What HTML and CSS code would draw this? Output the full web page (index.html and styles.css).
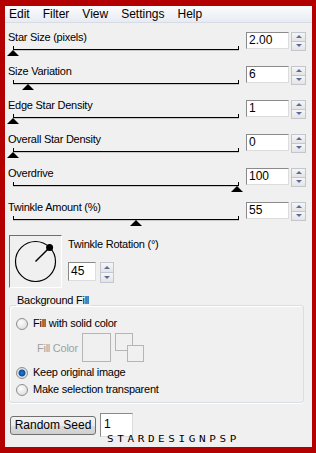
FILE: index.html
```html
<!DOCTYPE html>
<html>
<head>
    <title>Star Filter</title>
    <link rel="stylesheet" href="styles.css">
</head>
<body>
    <div class="window">
        <div class="menu">
            <span>Edit</span>
            <span>Filter</span>
            <span>View</span>
            <span>Settings</span>
            <span>Help</span>
        </div>

        <div class="params">
            <div class="param">
                <div class="track">
                    <div class="label">Star Size (pixels)</div>
                    <div class="rail"><div class="thumb" style="left: 0%"></div></div>
                </div>
                <div class="num">2.00</div>
                <div class="spin"><div class="up"></div><div class="down"></div></div>
            </div>
            <div class="param">
                <div class="track">
                    <div class="label">Size Variation</div>
                    <div class="rail"><div class="thumb" style="left: 6.5%"></div></div>
                </div>
                <div class="num">6</div>
                <div class="spin"><div class="up"></div><div class="down"></div></div>
            </div>
            <div class="param">
                <div class="track">
                    <div class="label">Edge Star Density</div>
                    <div class="rail"><div class="thumb" style="left: 0%"></div></div>
                </div>
                <div class="num">1</div>
                <div class="spin"><div class="up"></div><div class="down"></div></div>
            </div>
            <div class="param">
                <div class="track">
                    <div class="label">Overall Star Density</div>
                    <div class="rail"><div class="thumb" style="left: 0%"></div></div>
                </div>
                <div class="num">0</div>
                <div class="spin"><div class="up"></div><div class="down"></div></div>
            </div>
            <div class="param">
                <div class="track">
                    <div class="label">Overdrive</div>
                    <div class="rail"><div class="thumb" style="left: 100%"></div></div>
                </div>
                <div class="num">100</div>
                <div class="spin"><div class="up"></div><div class="down"></div></div>
            </div>
            <div class="param">
                <div class="track">
                    <div class="label">Twinkle Amount (%)</div>
                    <div class="rail"><div class="thumb" style="left: 55%"></div></div>
                </div>
                <div class="num">55</div>
                <div class="spin"><div class="up"></div><div class="down"></div></div>
            </div>
        </div>

        <div class="rotation">
            <div class="dial">
                <svg width="51" height="51" viewBox="0 0 51 51">
                    <circle cx="25.5" cy="25.5" r="20" fill="none" stroke="#000" stroke-width="1.2"/>
                    <line x1="25.5" y1="25.5" x2="39.6" y2="11.4" stroke="#000" stroke-width="1.4"/>
                    <circle cx="39.6" cy="11.4" r="3.5" fill="#000"/>
                </svg>
            </div>
            <div class="rot-side">
                <div class="label">Twinkle Rotation (&deg;)</div>
                <div class="rot-field">
                    <div class="num small">45</div>
                    <div class="spin small"><div class="up"></div><div class="down"></div></div>
                </div>
            </div>
        </div>

        <fieldset class="group">
            <legend>Background Fill</legend>
            <div class="radio-row"><span class="radio"></span>Fill with solid color</div>
            <div class="fill-row">
                <span class="fill-label">Fill Color</span>
                <span class="swatch"></span>
                <span class="squares"><span class="sq1"></span><span class="sq2"></span></span>
            </div>
            <div class="radio-row second"><span class="radio checked"></span>Keep original image</div>
            <div class="radio-row third"><span class="radio"></span>Make selection transparent</div>
        </fieldset>

        <div class="seed-row">
            <div class="button">Random Seed</div>
            <div class="seed">1</div>
        </div>
        <div class="mark">STARDESIGNPSP</div>
    </div>
</body>
</html>
```

FILE: styles.css
```css
body {
    margin: 0;
    height: 453px;
    overflow: hidden;
    background-color: #b30000;
    font-family: "Liberation Sans", Arial, sans-serif;
    font-size: 11px;
    letter-spacing: -0.25px;
    color: #000;
}

.window {
    margin: 6px 4px 0 5px;
    height: 441px;
    background-color: #f0f0f0;
    overflow: hidden;
}

.menu {
    display: flex;
    gap: 13px;
    height: 16px;
    line-height: 16px;
    padding-left: 4px;
    font-size: 12px;
    letter-spacing: 0;
    background: linear-gradient(#fcfcfd, #e7ebf2);
    border-bottom: 1px solid #d6dbe4;
}

.params {
    margin-top: 9px;
}

.param {
    display: flex;
    height: 34px;
    padding: 0 6px 0 3px;
}

.track {
    flex: 1;
}

.label {
    line-height: 14px;
    margin-top: -2px;
    white-space: nowrap;
}

.rail {
    position: relative;
    height: 3px;
    margin: 2px 7px 0 5px;
    border: 1px solid #000;
    border-top: none;
    box-shadow: 0 1px 0 #c8c8c8;
}

.thumb {
    position: absolute;
    top: calc(100% + 1px);
    width: 0;
    height: 0;
    margin-left: -7px;
    border-left: 6px solid transparent;
    border-right: 6px solid transparent;
    border-bottom: 6px solid #000;
}

.num {
    box-sizing: border-box;
    width: 43px;
    height: 17px;
    padding-left: 2px;
    line-height: 15px;
    font-size: 12px;
    letter-spacing: 0;
    background-color: #fff;
    border: 1px solid;
    border-color: #8a8a8a #dcdcdc #dcdcdc #8a8a8a;
}

.spin {
    display: flex;
    flex-direction: column;
    width: 15px;
    height: 19px;
    margin-left: 2px;
}

.spin .up,
.spin .down {
    flex: 1;
    position: relative;
    box-sizing: border-box;
    border: 1px solid #c3c6cc;
    background: linear-gradient(#f6f6f6, #e4e4e4);
}

.spin .down {
    margin-top: -1px;
}

.spin .up::after,
.spin .down::after {
    content: "";
    position: absolute;
    left: 50%;
    top: 50%;
    margin: -2px 0 0 -3px;
    border-left: 3px solid transparent;
    border-right: 3px solid transparent;
}

.spin .up::after {
    border-bottom: 3px solid #5a6c9c;
}

.spin .down::after {
    border-top: 3px solid #5a6c9c;
}

.rotation {
    display: flex;
    margin-top: -1px;
    padding-left: 4px;
}

.dial {
    width: 51px;
    height: 51px;
    border: 1px solid;
    border-color: #6f6f6f #ffffff #ffffff #6f6f6f;
}

.dial svg {
    display: block;
}

.rot-side {
    margin-left: 6px;
}

.rot-side .label {
    margin-top: 2px;
}

.rot-field {
    display: flex;
    margin-top: 11px;
}

.num.small {
    width: 28px;
    height: 19px;
    line-height: 17px;
}

.spin.small {
    width: 14px;
    height: 21px;
    margin-left: 4px;
}

.group {
    margin: 5px 8px 0 4px;
    padding: 0 6px 6px 6px;
    border: 1px solid #d5dfe5;
    border-radius: 3px;
    box-shadow: inset 1px 1px 0 #fff, 0 1px 0 #fff;
}

.group legend {
    padding: 0 1px 10px;
    line-height: 14px;
}

.radio-row {
    display: flex;
    align-items: center;
    gap: 5px;
    height: 13px;
    line-height: 13px;
}

.radio-row.second {
    margin-top: 4px;
}

.radio-row.third {
    margin-top: 4px;
}

.radio {
    box-sizing: border-box;
    width: 12px;
    height: 12px;
    border-radius: 50%;
    border: 1px solid #8e8f8f;
    background: radial-gradient(circle at 40% 35%, #fdfdfd, #d6d6d6);
}

.radio.checked {
    background: radial-gradient(circle, #1f7fd6 0, #0c4f9c 3px, #eaeaea 4px, #d0d0d0 6px);
}

.fill-row {
    display: flex;
    align-items: center;
    margin-top: 3px;
    padding-left: 21px;
}

.fill-label {
    color: #a0a0a0;
    width: 45px;
}

.swatch {
    box-sizing: border-box;
    width: 29px;
    height: 29px;
    border: 1px solid #b5b5b5;
}

.squares {
    display: grid;
    margin-left: 4px;
}

.sq1,
.sq2 {
    grid-area: 1 / 1;
    box-sizing: border-box;
    border: 1px solid #b5b5b5;
    background-color: #f0f0f0;
}

.sq1 {
    width: 18px;
    height: 18px;
}

.sq2 {
    width: 17px;
    height: 17px;
    margin: 12px 0 0 12px;
}

.seed-row {
    display: flex;
    align-items: center;
    gap: 4px;
    margin-top: 10px;
    padding-left: 5px;
}

.button {
    box-sizing: border-box;
    width: 86px;
    height: 19px;
    line-height: 17px;
    text-align: center;
    font-size: 12px;
    letter-spacing: 0;
    border: 1px solid #707070;
    border-radius: 3px;
    background: linear-gradient(#f2f2f2 0%, #ebebeb 50%, #dddddd 51%, #cfcfcf 100%);
}

.seed {
    box-sizing: border-box;
    width: 33px;
    height: 24px;
    padding-left: 3px;
    line-height: 20px;
    font-size: 12px;
    background-color: #fff;
    border: 1px solid;
    border-color: #8a8a8a #dcdcdc #dcdcdc #8a8a8a;
}

/* pixel-style signature under the seed field */
.mark {
    margin-top: 0;
    padding-left: 102px;
    font-family: "DejaVu Sans Mono", monospace;
    font-size: 11px;
    line-height: 8px;
    letter-spacing: 3.6px;
    transform: scaleY(0.72);
    transform-origin: left top;
}
```
